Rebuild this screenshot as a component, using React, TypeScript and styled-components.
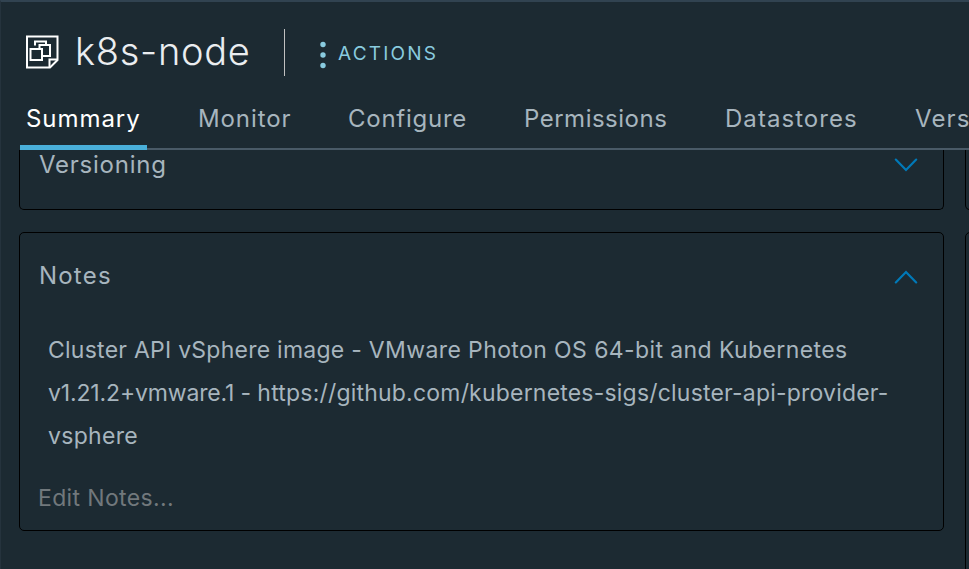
import React from 'react';
import styled, { createGlobalStyle } from 'styled-components';

const GlobalStyle = createGlobalStyle`
  *, *::before, *::after { box-sizing: border-box; }
  html, body { margin: 0; overflow: hidden; background: #1c2a32; }
`;

const Page = styled.main`
  display: flex;
  flex-direction: column;
  height: 569px;
  overflow: hidden;
  border-top: 2px solid #314351;
  border-left: 1px solid #25333d;
  background: #1c2a32;
  color: #a7b5be;
  font-family: Inter, "Open Sans", sans-serif;
  font-weight: 400;
`;

const Header = styled.header`
  display: flex;
  align-items: center;
  flex: none;
  height: 98px;
  padding-left: 24px;
`;

const NodeIcon = styled.svg`
  flex: none;
  width: 34px;
  height: 34px;
  margin-top: 1px;
`;

const Title = styled.h1`
  width: 210px;
  margin: 0 0 0 15px;
  padding: 0 0 0 1px;
  font-size: 38px;
  line-height: 46px;
  font-weight: 300;
  letter-spacing: 0.7px;
  color: #eaedf0;
`;

const Divider = styled.span`
  width: 1px;
  height: 47px;
  margin: 3px 35px 0 0;
  background: #c1c1c1;
`;

const ActionsButton = styled.button`
  display: flex;
  align-items: center;
  gap: 12px;
  padding: 5px 0 0;
  border: 0;
  background: none;
  color: #89cbdf;
  font: 400 19px/24px Inter, "Open Sans", sans-serif;
  letter-spacing: 2.2px;
`;

const Dots = styled.svg`
  width: 6px;
  height: 28px;
  margin-top: 2px;
`;

const TabBar = styled.nav`
  display: flex;
  flex: none;
  height: 50px;
  margin-left: 19px;
  gap: 47px;
  box-shadow: inset 0 -2px #495a67;
`;

const Tab = styled.a<{ $active?: boolean; $width: number; $spacing: number }>`
  flex: none;
  width: ${p => p.$width}px;
  padding: 4px 0 0 ${p => (p.$active ? 6 : 4)}px;
  font-size: 24px;
  line-height: 30px;
  letter-spacing: ${p => p.$spacing}px;
  white-space: nowrap;
  color: ${p => (p.$active ? '#ffffff' : '#a7b5be')};
  box-shadow: ${p => (p.$active ? 'inset 0 -5px #49afd9' : 'none')};
`;

const Content = styled.div`
  display: grid;
  grid-template-columns: 925px 925px;
  column-gap: 21px;
  flex: 1;
  min-height: 0;
  margin-left: 18px;
  overflow: hidden;
`;

const Column = styled.div`
  display: flex;
  flex-direction: column;
  gap: 22px;
`;

const Card = styled.section<{ $height: number; $clipped?: boolean }>`
  flex: none;
  height: ${p => p.$height}px;
  border: 1px solid #000;
  border-top-width: ${p => (p.$clipped ? 0 : 1)}px;
  border-radius: ${p => (p.$clipped ? '0 0 5px 5px' : '5px')};
`;

const CardHeader = styled.header<{ $top: number }>`
  display: flex;
  justify-content: space-between;
  align-items: center;
  height: 30px;
  margin-top: ${p => p.$top}px;
  padding: 0 25px 0 19px;
`;

const CardTitle = styled.h2<{ $spacing: number }>`
  margin: 0;
  font-size: 24px;
  line-height: 30px;
  font-weight: 400;
  letter-spacing: ${p => p.$spacing}px;
`;

const ChevronIcon = styled.svg<{ $up?: boolean }>`
  width: 24px;
  height: 14px;
  margin-top: ${p => (p.$up ? 2 : 0)}px;
`;

const NoteText = styled.div`
  margin: 38px 0 0 28px;
  font-size: 23px;
  line-height: 43px;
`;

const NoteLine = styled.div`
  white-space: pre;
`;

const NoteRun = styled.span<{ $spacing: number }>`
  letter-spacing: ${p => p.$spacing}px;
`;

const EditNotes = styled.a`
  display: block;
  margin: 26px 0 0 18px;
  font-size: 23px;
  line-height: 28px;
  letter-spacing: 0.35px;
  color: #71787c;
`;

const Chevron = ({ up }: { up?: boolean }) => (
  <ChevronIcon $up={up} viewBox="0 0 24 14" fill="none" stroke="#0079b8" strokeWidth="2.2" strokeLinecap="round">
    <path d={up ? 'M1.8 12.4 12 2l10.2 10.4' : 'M1.8 1.6 12 12 22.2 1.6'} />
  </ChevronIcon>
);

const tabs = [
  { label: 'Summary', width: 127, spacing: 0.95, active: true },
  { label: 'Monitor', width: 103, spacing: 0.9 },
  { label: 'Configure', width: 129, spacing: 0.75 },
  { label: 'Permissions', width: 154, spacing: 0.5 },
  { label: 'Datastores', width: 143, spacing: 1.05 },
  { label: 'Versions', width: 120, spacing: 1.1 },
];

const notes = [
  [
    { text: 'Cluster API vSphere image - ', spacing: 0.25 },
    { text: 'VMware Photon OS 64-bit and Kubernetes', spacing: 0.4 },
  ],
  [
    { text: 'v1.21.2+vmware.1 - ', spacing: -0.15 },
    { text: 'https://github.com/kubernetes-sigs/cluster-api-provider-', spacing: 0.2 },
  ],
  [{ text: 'vsphere', spacing: 0.3 }],
];

export default function App() {
  return (
    <>
      <GlobalStyle />
      <Page>
        <Header>
          <NodeIcon viewBox="0 0 34 34" fill="none" stroke="#fff" strokeWidth="2">
            <path d="M2 1.500H32.500V25L25 32.500H2Z" />
            <path d="M24.500 32V24.500H32" />
            <path d="M10 10.500V6.500H21V10" />
            <path d="M14.500 14V10H25V21H17.500" />
            <path d="M5.500 14H17V25H5.500Z" />
          </NodeIcon>
          <Title>k8s-node</Title>
          <Divider />
          <ActionsButton>
            <Dots viewBox="0 0 6 28" fill="#89cbdf">
              <circle cx="3" cy="3.5" r="2.7" />
              <circle cx="3" cy="14" r="2.7" />
              <circle cx="3" cy="24.5" r="2.7" />
            </Dots>
            ACTIONS
          </ActionsButton>
        </Header>
        <TabBar>
          {tabs.map(t => (
            <Tab key={t.label} $active={t.active} $width={t.width} $spacing={t.spacing}>
              {t.label}
            </Tab>
          ))}
        </TabBar>
        <Content>
          <Column>
            <Card $height={60} $clipped>
              <CardHeader $top={0}>
                <CardTitle $spacing={0.75}>Versioning</CardTitle>
                <Chevron />
              </CardHeader>
            </Card>
            <Card $height={299}>
              <CardHeader $top={28}>
                <CardTitle $spacing={1.2}>Notes</CardTitle>
                <Chevron up />
              </CardHeader>
              <NoteText>
                {notes.map(line => (
                  <NoteLine key={line[0].text}>
                    {line.map(run => (
                      <NoteRun key={run.text} $spacing={run.spacing}>{run.text}</NoteRun>
                    ))}
                  </NoteLine>
                ))}
              </NoteText>
              <EditNotes>Edit Notes...</EditNotes>
            </Card>
          </Column>
          <Column>
            <Card $height={60} $clipped />
            <Card $height={420} />
          </Column>
        </Content>
      </Page>
    </>
  );
}
